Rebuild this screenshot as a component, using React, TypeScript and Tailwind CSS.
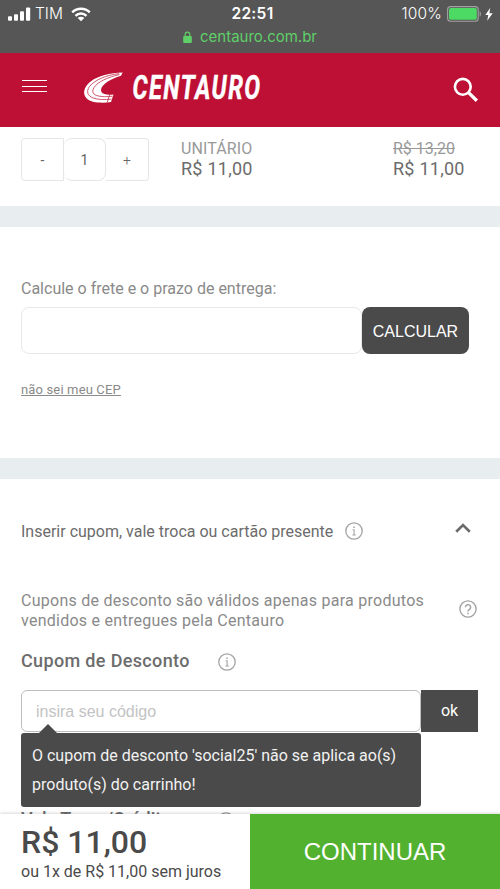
import React from 'react';

interface IconProps {
  className?: string;
}

const IconSignal: React.FC<IconProps> = ({ className }) => (
  <svg className={className} viewBox="0 0 23 14" fill="currentColor">
    <rect x="0" y="9.3" width="4" height="4.4" rx="1" />
    <rect x="6" y="7.3" width="4" height="6.4" rx="1" />
    <rect x="12" y="4.3" width="4" height="9.4" rx="1" />
    <rect x="18" y="0.5" width="4.2" height="13.2" rx="1" />
  </svg>
);

const IconWifi: React.FC<IconProps> = ({ className }) => (
  <svg className={className} viewBox="0 0 20 15" fill="none" stroke="currentColor" strokeWidth="2.5">
    <path d="M1.2 5.4a12.6 12.6 0 0 1 17.6 0" />
    <path d="M4.5 8.8a7.9 7.9 0 0 1 11 0" />
    <path d="M10 14.3 6.7 11a4.7 4.7 0 0 1 6.6 0z" fill="currentColor" stroke="none" />
  </svg>
);

const IconLock: React.FC<IconProps> = ({ className }) => (
  <svg className={className} viewBox="0 0 9 12">
    <path d="M2.2 6V3.4a2.3 2.3 0 0 1 4.6 0V6" fill="none" stroke="currentColor" strokeWidth="1.2" />
    <rect x="0.2" y="5" width="8.6" height="7" rx="1" fill="currentColor" />
  </svg>
);

const IconBattery: React.FC<IconProps> = ({ className }) => (
  <svg className={className} viewBox="0 0 35 16">
    <rect x="0.6" y="0.6" width="30.6" height="14.6" rx="3" fill="none" stroke="#a3a3a3" strokeWidth="1.1" />
    <rect x="2" y="2" width="27.8" height="11.8" rx="1.8" fill="#4cd964" />
    <path d="M32.7 5.2c1.6.6 1.6 4.8 0 5.4z" fill="#a3a3a3" />
  </svg>
);

const IconBolt: React.FC<IconProps> = ({ className }) => (
  <svg className={className} viewBox="0 0 8 13" fill="currentColor">
    <path d="M5.2 0 0.3 7.1h3L2.2 12.8 7.7 5.2H4.4z" />
  </svg>
);

const IconSearch: React.FC<IconProps> = ({ className }) => (
  <svg className={className} viewBox="0 0 26 26" fill="none" stroke="currentColor" strokeWidth="2.6">
    <circle cx="9.8" cy="9.8" r="7.9" />
    <path d="m15.6 15.6 8.2 8.2" strokeWidth="3.4" />
  </svg>
);

const IconInfo: React.FC<IconProps> = ({ className }) => (
  <svg className={className} viewBox="0 0 18 18" fill="none" stroke="currentColor" strokeWidth="1.3">
    <circle cx="9" cy="9" r="8.2" />
    <path d="M7.6 7.7H9.1v5.2M7.4 13h3.4" strokeWidth="1.1" />
    <path d="M8.3 5.2h1.5" strokeWidth="1.5" />
  </svg>
);

const IconHelp: React.FC<IconProps> = ({ className }) => (
  <svg className={className} viewBox="0 0 18 18" fill="none" stroke="currentColor" strokeWidth="1.4">
    <circle cx="9" cy="9" r="8.1" />
    <path d="M6.4 7.2a2.6 2.6 0 1 1 4.3 2C9.6 10 9 10.3 9 11.6M9 12.7v1.5" strokeWidth="1.5" />
  </svg>
);

const IconChevronUp: React.FC<IconProps> = ({ className }) => (
  <svg className={className} viewBox="0 0 16 10" fill="none" stroke="currentColor" strokeWidth="2.7">
    <path d="m1.2 8.8 6.8-6.7 6.8 6.7" />
  </svg>
);

const Logo = () => (
  <svg className="w-[182px] h-8 text-white overflow-visible" viewBox="0 0 182 32" fill="currentColor">
    <path d="M39.7 1.6C27 1.8 15 5 8 10.3 2.5 14.5.2 19.5 1.500 24c1.500 4.500 6.500 7 13 7.500 5 .3 9.500.2 13.500-.4L30.500 23.500c-6 .7-10.500 0-12-2.500C16 16.500 23.500 9 38 4.800z" />
    <path
      d="M36 2.600C23.500 4 11.500 9 6.500 15.500c-3.500 5-2 9.300 3.500 11.400 5 1.900 12 2.100 18.500 1.200M36.500 3.600C25 6 14.500 11 11 16.500c-2.600 4.500-.8 7.300 4 8.400 4 1 9 1 14.500.3M26.700 23.300l-2.500 8.300"
      fill="none"
      stroke="#bd1034"
      strokeWidth="0.7"
    />
    <text
      x="49.5"
      y="28"
      textLength="129"
      lengthAdjust="spacingAndGlyphs"
      stroke="currentColor"
      strokeWidth="0.5"
      className="font-['Roboto'] text-[33px] font-bold italic tracking-[2px]"
    >
      CENTAURO
    </text>
  </svg>
);

const StatusBar = () => (
  <div className="h-[53px] shrink-0 bg-[#565656] text-white font-['Inter',sans-serif]">
    <div className="grid grid-cols-3 items-center h-7 pl-2 pr-[7px]">
      <div className="flex items-center">
        <IconSignal className="w-[23px] h-3.5" />
        <span className="ml-1 text-[15.5px] font-light">TIM</span>
        <IconWifi className="ml-2 w-5 h-[15px]" />
      </div>
      <span className="pl-1 text-center text-[15.5px] font-semibold tracking-[0.3px]">22:51</span>
      <div className="flex items-center justify-end">
        <span className="text-[15.5px] font-light tracking-[0.2px]">100%</span>
        <IconBattery className="ml-[5px] w-[35px] h-4" />
        <IconBolt className="ml-[3px] w-2 h-[13px]" />
      </div>
    </div>
    <div className="flex items-center justify-center h-[17px] text-[#5fd068]">
      <IconLock className="w-[9px] h-3" />
      <span className="ml-2 text-[15px] leading-[17px]">centauro.com.br</span>
    </div>
  </div>
);

const Header = () => (
  <header className="flex items-center h-[74px] shrink-0 bg-[#bd1034] px-[22px] text-white">
    <button className="flex flex-col justify-between w-[25px] h-3 -mt-2">
      <span className="w-full h-px bg-white" />
      <span className="w-full h-px bg-white" />
      <span className="w-full h-px bg-white" />
    </button>
    <div className="ml-9 -mt-1.5">
      <Logo />
    </div>
    <button className="ml-auto -mr-px">
      <IconSearch className="w-[26px] h-[26px]" />
    </button>
  </header>
);

const Quantity = () => (
  <div className="flex w-32 h-[43px] text-sm text-[#666]">
    <button className="w-[43px] border border-[#e6e6e6] rounded-l-sm">-</button>
    <div className="flex items-center justify-center w-[42px] border border-[#e6e6e6] border-l-0 rounded-lg">1</div>
    <button className="w-[43px] border border-[#e6e6e6] border-l-0 rounded-r-sm font-light">+</button>
  </div>
);

const Divider = () => <div className="h-[21px] shrink-0 bg-[#e8edf0]" />;

const App = () => {
  return (
    <div className="flex flex-col h-screen overflow-hidden bg-white font-['Roboto',sans-serif] text-[#8a8a8a]">
      <StatusBar />
      <Header />

      <main className="flex-1 min-h-0 overflow-hidden">
        <section className="flex h-[79px] pt-[11px] pl-[21px]">
          <Quantity />
          <div className="ml-8 mt-px w-[212px] tracking-[0.1px]">
            <p className="text-base leading-5 text-[#999]">UNITÁRIO</p>
            <p className="text-lg leading-5 tracking-[0.25px] text-[#6c6c6c]">R$ 11,00</p>
          </div>
          <div className="mt-px">
            <p className="text-base leading-5 text-[#999] line-through">R$ 13,20</p>
            <p className="text-lg leading-5 tracking-[0.25px] text-[#6c6c6c]">R$ 11,00</p>
          </div>
        </section>

        <Divider />

        <section className="h-[231px] pt-[50px] pl-[21px]">
          <label className="block text-base leading-6">Calcule o frete e o prazo de entrega:</label>
          <div className="flex mt-1.5 h-[47px]">
            <input className="w-[341px] border border-[#e8e8e8] rounded-lg px-3 outline-none" />
            <button className="w-[107px] pt-0.5 rounded-lg bg-[#4a4a4a] font-['Liberation_Sans',sans-serif] text-base text-white">
              CALCULAR
            </button>
          </div>
          <a href="#" className="inline-block mt-[26px] text-[13px] leading-5 tracking-[0.15px] underline">
            não sei meu CEP
          </a>
        </section>

        <Divider />

        <section className="pt-[41px] pl-[21px] pr-[22px]">
          <div className="flex items-center h-6 text-[#6c6c6c]">
            <h2 className="text-base">Inserir cupom, vale troca ou cartão presente</h2>
            <IconInfo className="ml-3 -mt-0.5 w-[18px] h-[18px] text-[#a3a3a3]" />
            <IconChevronUp className="ml-auto mr-[7px] -mt-2 w-4 h-2.5" />
          </div>

          <div className="flex items-center mt-[47px]">
            <p className="w-[425px] text-base leading-5 tracking-[0.26px]">
              Cupons de desconto são válidos apenas para produtos vendidos e entregues pela Centauro
            </p>
            <IconHelp className="ml-auto mr-px -mt-1 w-[18px] h-[18px] text-[#a3a3a3]" />
          </div>

          <div className="flex items-center mt-[18px] h-6">
            <h3 className="text-lg font-medium tracking-[0.35px] text-[#6c6c6c]">Cupom de Desconto</h3>
            <IconInfo className="ml-7 mt-0.5 w-[18px] h-[18px] text-[#a3a3a3]" />
          </div>

          <div className="relative flex mt-[17px] h-[42px]">
            <input
              placeholder="insira seu código"
              className="w-[400px] pt-0.5 border border-[#bdbdbd] rounded-md px-3.5 font-['Liberation_Sans',sans-serif] text-base outline-none placeholder:text-[#c3c3c3]"
            />
            <button className="w-[57px] bg-[#4a4a4a] text-base text-white">ok</button>
            <div className="absolute left-0 top-[43px] w-[400px] h-[74px] rounded-[3px] bg-[#4a4a4a] pt-2 pl-[11px] text-base leading-[29px] text-[#f2f2f2]">
              <svg className="absolute left-[17px] -top-[9px] w-5 h-2.5" viewBox="0 0 20 10" fill="#4a4a4a">
                <path d="M0 10 10 0l10 10z" />
              </svg>
              O cupom de desconto 'social25' não se aplica ao(s) produto(s) do carrinho!
            </div>
          </div>

          <div className="flex items-center mt-[75px] h-6">
            <h3 className="text-lg font-medium text-[#6c6c6c]">Vale Troca/Crédito</h3>
            <IconInfo className="ml-[46px] mt-1 w-[18px] h-[18px] text-[#999]" />
          </div>
        </section>
      </main>

      <footer className="relative flex h-[75px] shrink-0 bg-white shadow-[0_-1px_3px_rgba(0,0,0,0.15)]">
        <div className="w-1/2 pl-[21px] pt-2.5 text-[#4a4a4a]">
          <p className="text-[32px] leading-9 font-medium">R$ 11,00</p>
          <p className="text-base leading-6">ou 1x de R$ 11,00 sem juros</p>
        </div>
        <button className="w-1/2 bg-[#52b12f] font-['Liberation_Sans',sans-serif] text-2xl text-white">
          CONTINUAR
        </button>
      </footer>
    </div>
  );
};

export default App;
